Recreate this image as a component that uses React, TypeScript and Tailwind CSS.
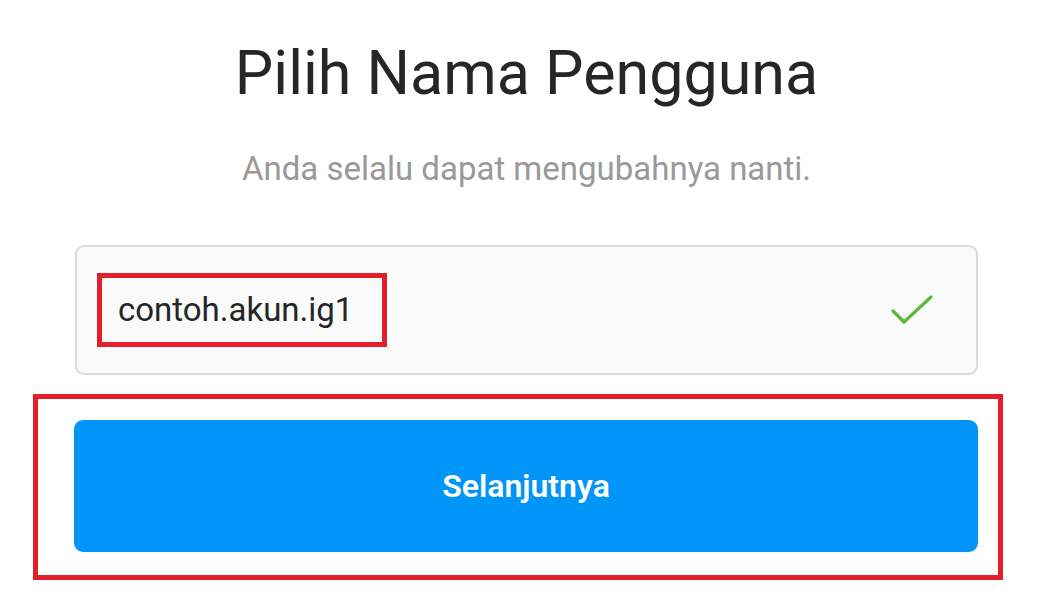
import React from 'react';

export default function App() {
    return (
        <div className="w-full h-[597px] bg-white overflow-hidden font-['Roboto',sans-serif]">
            <div className="ml-[75px] w-[903px] flex flex-col">
                {/* heading */}
                <h1 className="mt-[43px] text-center text-[61px] leading-[61px] font-normal text-[#262626]">
                    Pilih Nama Pengguna
                </h1>
                <p className="mt-[48px] text-center text-[33px] leading-[33px] text-[#999999]">
                    Anda selalu dapat mengubahnya nanti.
                </p>

                {/* username field */}
                <div className="mt-[60px] h-[130px] rounded-[9px] border-2 border-[#dbdbdb] bg-[#fafafa] flex items-center justify-between pl-[20px] pr-[43px]">
                    <div className="h-[74px] w-[290px] border-[5px] border-[#e3202a] flex items-center pl-[16px]">
                        <span className="text-[33px] text-[#262626]">contoh.akun.ig1</span>
                    </div>
                    <svg width="42" height="30" viewBox="0 0 42 30" fill="none">
                        <path d="M2 16 L13 27 L40 2" stroke="#5bb83a" strokeWidth="3.2" strokeLinecap="round" strokeLinejoin="round" />
                    </svg>
                </div>

                {/* next button */}
                <div className="mt-[19px] -ml-[42px] w-[970px] border-[5px] border-[#e3202a] pl-[36px] pr-[20px] pt-[21px] pb-[23px]">
                    <button className="w-full h-[132px] rounded-[9px] bg-[#0095f6] text-white text-[32px] font-semibold">
                        Selanjutnya
                    </button>
                </div>
            </div>
        </div>
    );
}
